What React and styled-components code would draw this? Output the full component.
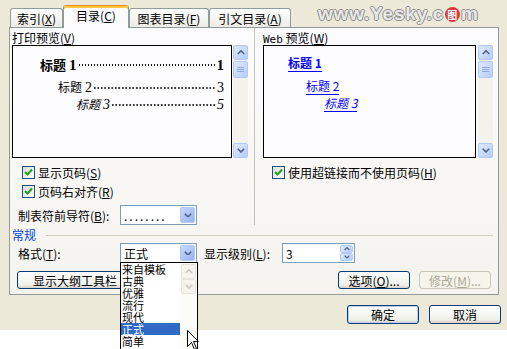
import React from "react";
import styled, { createGlobalStyle, css } from "styled-components";

const GlobalStyle = createGlobalStyle`
  html, body {
    margin: 0;
    padding: 0;
    background: #ffffff;
  }
  body {
    font-family: "Noto Sans CJK SC", "Liberation Sans", sans-serif;
    font-size: 12px;
    color: #000000;
  }
`;

const Screen = styled.div`
  position: relative;
  width: 507px;
  height: 349px;
  overflow: hidden;
  background: #ffffff;
`;

const Dialog = styled.div`
  height: 330px;
  box-sizing: border-box;
  padding-top: 5px;
  background: #ece9d8;
  display: flex;
  flex-direction: column;
`;

const TabRow = styled.div`
  display: flex;
  align-items: flex-end;
  height: 22px;
  margin-left: 10px;
  position: relative;
  z-index: 1;
`;

const Tab = styled.div`
  box-sizing: border-box;
  width: ${(p) => p.$w}px;
  height: 19px;
  border: 1px solid #919b9c;
  border-bottom: none;
  border-radius: 3px 3px 0 0;
  background: linear-gradient(#ffffff, #ecebe6);
  display: flex;
  align-items: center;
  justify-content: center;
  line-height: 12px;
  padding-top: 2px;
  white-space: nowrap;
  ${(p) =>
    p.$active &&
    css`
      height: 23px;
      margin-bottom: -1px;
      padding-top: 0;
      padding-bottom: 3px;
      background: #fcfcfe;
      border-top-color: #e68b2c;
      box-shadow: inset 0 2px 0 #ffc83c;
    `}
`;

const Panel = styled.div`
  box-sizing: border-box;
  margin-left: 9px;
  width: 490px;
  height: 268px;
  border: 1px solid #919b9c;
  background: linear-gradient(#fcfcfe, #f4f3ee);
  display: flex;
  flex-direction: column;
`;

const TopArea = styled.div`
  display: flex;
  padding-bottom: 2px;
`;

const LeftCol = styled.div`
  width: 242px;
  padding: 4px 0 0 2px;
  display: flex;
  flex-direction: column;
`;

const RightCol = styled.div`
  flex: 1;
  border-left: 1px solid #c6c4b8;
  padding: 4px 0 0 8px;
  display: flex;
  flex-direction: column;
`;

const FieldLabel = styled.div`
  height: 12px;
  line-height: 12px;
  margin-bottom: 1px;
  white-space: nowrap;
`;

const MonoWord = styled.span`
  font-family: "DejaVu Sans Mono", monospace;
  font-size: 11px;
`;

const PreviewRow = styled.div`
  display: flex;
  height: 113px;
  gap: ${(p) => p.$gap}px;
`;

const PreviewBox = styled.div`
  box-sizing: border-box;
  width: ${(p) => p.$w}px;
  border: 1px solid #000000;
  background: #fdfdff;
  display: flex;
  flex-direction: column;
  padding-top: 8px;
`;

const TocLine = styled.div`
  display: flex;
  align-items: baseline;
  margin-left: ${(p) => p.$indent}px;
  margin-right: 7px;
  margin-top: ${(p) => p.$top}px;
  height: ${(p) => p.$h}px;
  white-space: nowrap;
  font-weight: ${(p) => (p.$bold ? 700 : 400)};
  font-style: ${(p) => (p.$italic ? "italic" : "normal")};
`;

const HeadWord = styled.span`
  font-family: "Noto Sans CJK SC", sans-serif;
  font-size: ${(p) => p.$size}px;
  margin-right: 3px;
`;

const Num = styled.span`
  font-family: "Liberation Serif", serif;
  font-size: ${(p) => p.$size}px;
`;

const Leader = styled.span`
  flex: 1;
  align-self: flex-end;
  height: 2px;
  margin: 0 1px 4px 1px;
  background-image: radial-gradient(
    circle,
    #000000 ${(p) => (p.$dense ? 0.9 : 0.6)}px,
    transparent ${(p) => (p.$dense ? 1.1 : 0.9)}px
  );
  background-size: ${(p) => (p.$dense ? 3 : 3.5)}px 2px;
  background-repeat: repeat-x;
`;

const WebLink = styled.div`
  margin-left: ${(p) => p.$indent}px;
  margin-top: ${(p) => p.$top}px;
  height: ${(p) => p.$h}px;
  line-height: ${(p) => p.$h}px;
  color: #0000ff;
  white-space: nowrap;
  font-weight: ${(p) => (p.$bold ? 700 : 400)};
  font-style: ${(p) => (p.$italic ? "italic" : "normal")};
  span {
    border-bottom: 1px solid #0000ff;
  }
`;

const ScrollTrack = styled.div`
  width: 15px;
  display: flex;
  flex-direction: column;
  background: ${(p) => (p.$off ? "#f7f6f1" : "#f3f2ec")};
`;

const ScrollBtn = styled.div`
  box-sizing: border-box;
  width: 15px;
  height: 15px;
  border-radius: 2px;
  border: 1px solid ${(p) => (p.$off ? "#e6e4da" : "#b4c8f6")};
  background: ${(p) =>
    p.$off ? "#f4f3ee" : "linear-gradient(135deg, #dde8fe, #b7cdf8)"};
  display: flex;
  align-items: center;
  justify-content: center;
`;

const Thumb = styled(ScrollBtn)`
  height: 17px;
  margin-top: 1px;
`;

const Grow = styled.div`
  flex: 1;
`;

const CheckRow = styled.div`
  display: flex;
  align-items: center;
  gap: 3px;
  height: 13px;
  margin-left: ${(p) => p.$left}px;
  margin-top: ${(p) => p.$top}px;
  white-space: nowrap;
`;

const Box = styled.div`
  box-sizing: border-box;
  width: 13px;
  height: 13px;
  border: 1px solid #1c5180;
  background: linear-gradient(135deg, #dcdcd7, #ffffff);
  display: flex;
  align-items: center;
  justify-content: center;
`;

const FormRow = styled.div`
  display: flex;
  align-items: center;
  height: ${(p) => p.$h || 20}px;
  margin-top: ${(p) => p.$top}px;
  padding-left: ${(p) => p.$left}px;
  white-space: nowrap;
`;

const RowLabel = styled.div`
  width: ${(p) => p.$w}px;
  margin-left: ${(p) => p.$ml || 0}px;
  flex-shrink: 0;
`;

const Combo = styled.div`
  box-sizing: border-box;
  width: ${(p) => p.$w}px;
  height: 20px;
  border: 1px solid #7f9db9;
  background: #ffffff;
  display: flex;
  align-items: center;
  padding: 0 1px 0 3px;
`;

const ComboText = styled.div`
  flex: 1;
  letter-spacing: ${(p) => (p.$spaced ? 2 : 0)}px;
`;

const DropBtn = styled.div`
  box-sizing: border-box;
  width: 15px;
  height: 16px;
  border-radius: 2px;
  border: 1px solid #b4c8f6;
  background: linear-gradient(135deg, #c8d8fc, #96b2ef);
  display: flex;
  align-items: center;
  justify-content: center;
`;

const SpinBtns = styled.div`
  width: 13px;
  height: 16px;
  display: flex;
  flex-direction: column;
`;

const SpinHalf = styled.div`
  flex: 1;
  box-sizing: border-box;
  border: 1px solid #b4c8f6;
  border-radius: 2px;
  background: linear-gradient(135deg, #dde8fe, #b7cdf8);
  display: flex;
  align-items: center;
  justify-content: center;
`;

const GroupHead = styled.div`
  display: flex;
  align-items: center;
  height: 12px;
  margin-top: 2px;
  padding-left: 2px;
  padding-right: 5px;
  color: #0046d5;
  line-height: 12px;
`;

const GroupLine = styled.div`
  flex: 1;
  height: 1px;
  margin-left: 10px;
  background: #d0d0bf;
`;

const Button = styled.div`
  box-sizing: border-box;
  width: ${(p) => p.$w}px;
  height: ${(p) => p.$h || 18}px;
  margin-left: ${(p) => p.$ml || 0}px;
  border: 1px solid ${(p) => (p.$disabled ? "#c9c7ba" : "#003c74")};
  border-radius: 3px;
  background: ${(p) =>
    p.$disabled ? "#f5f4ea" : "linear-gradient(#ffffff, #f0f0ea 80%, #d6d0c5)"};
  color: ${(p) => (p.$disabled ? "#aca899" : "#000000")};
  display: flex;
  align-items: center;
  justify-content: ${(p) => (p.$start ? "flex-start" : "center")};
  padding-left: ${(p) => (p.$start ? 15 : 0)}px;
  white-space: nowrap;
  flex-shrink: 0;
  ${(p) =>
    p.$default &&
    css`
      box-shadow: inset 0 0 0 1px #b7cef8;
    `}
`;

const ButtonRow = styled.div`
  display: flex;
  align-items: center;
  margin-top: 8px;
  padding-left: 7px;
`;

const Footer = styled.div`
  display: flex;
  justify-content: flex-end;
  gap: 10px;
  margin-top: 10px;
  padding-right: 6px;
`;

const Watermark = styled.div`
  position: absolute;
  left: 318px;
  top: 3px;
  display: flex;
  align-items: center;
  font-family: "Liberation Sans", sans-serif;
  font-weight: 700;
  font-size: 19px;
  letter-spacing: 0.8px;
  color: #e9e9e9;
  text-shadow: 1px 0 0 #8d8d8d, -1px 0 0 #8d8d8d, 0 1px 0 #8d8d8d, 0 -1px 0 #8d8d8d;
`;

const RedDot = styled.span`
  display: inline-flex;
  align-items: center;
  justify-content: center;
  width: 15px;
  height: 15px;
  margin: 0 1px;
  border-radius: 50%;
  background: #d9383c;
  color: #ffffff;
  font-size: 10px;
  text-shadow: none;
  font-family: "Noto Sans CJK SC", sans-serif;
`;

const DropList = styled.div`
  position: absolute;
  left: 120px;
  top: 262px;
  width: 78px;
  height: 92px;
  box-sizing: border-box;
  border: 1px solid #000000;
  background: #ffffff;
  display: flex;
  z-index: 2;
`;

const Items = styled.div`
  width: 60px;
  display: flex;
  flex-direction: column;
`;

const Item = styled.div`
  height: 12px;
  display: flex;
  align-items: center;
  font-size: 11px;
  line-height: 1;
  padding-left: 1px;
  background: ${(p) => (p.$sel ? "#316ac5" : "transparent")};
  color: ${(p) => (p.$sel ? "#ffffff" : "#000000")};
`;

const ListScroll = styled.div`
  flex: 1;
  display: flex;
  flex-direction: column;
  padding: 1px 1px 0 1px;
  background: #fbfbf8;
`;

const Cursor = styled.svg`
  position: absolute;
  left: 187px;
  top: 330px;
  z-index: 3;
`;

const Chevron = ({ down, color = "#4d6185", w = 8 }) => (
  <svg width={w} height={w * 0.6} viewBox="0 0 10 6">
    <path
      d={down ? "M1 1 L5 5 L9 1" : "M1 5 L5 1 L9 5"}
      fill="none"
      stroke={color}
      strokeWidth="2"
    />
  </svg>
);

const Grip = () => (
  <svg width="7" height="7" viewBox="0 0 7 7">
    <path d="M0 1.5 H7 M0 3.5 H7 M0 5.5 H7" stroke="#8fa8e0" strokeWidth="1" />
  </svg>
);

const Tick = () => (
  <svg width="9" height="9" viewBox="0 0 9 9">
    <path d="M1 4 L3.5 6.5 L8 1.5" fill="none" stroke="#21a121" strokeWidth="2" />
  </svg>
);

const Mn = ({ k }) => (
  <span>
    (<u>{k}</u>)
  </span>
);

const Scroll = ({ off }) => (
  <ScrollTrack $off={off}>
    <ScrollBtn $off={off}>
      <Chevron color={off ? "#c9c7ba" : "#4d6185"} />
    </ScrollBtn>
    {!off && (
      <Thumb>
        <Grip />
      </Thumb>
    )}
    <Grow />
    <ScrollBtn $off={off}>
      <Chevron down color={off ? "#c9c7ba" : "#4d6185"} />
    </ScrollBtn>
  </ScrollTrack>
);

const Check = ({ children, left, top }) => (
  <CheckRow $left={left} $top={top}>
    <Box>
      <Tick />
    </Box>
    {children}
  </CheckRow>
);

const formats = ["来自模板", "古典", "优雅", "流行", "现代", "正式", "简单"];

const App = () => {
  return (
    <Screen>
      <GlobalStyle />
      <Dialog>
        <TabRow>
          <Tab $w={53}>
            索引<Mn k="X" />
          </Tab>
          <Tab $w={66} $active>
            目录<Mn k="C" />
          </Tab>
          <Tab $w={80}>
            图表目录<Mn k="F" />
          </Tab>
          <Tab $w={82}>
            引文目录<Mn k="A" />
          </Tab>
        </TabRow>

        <Panel>
          <TopArea>
            <LeftCol>
              <FieldLabel>
                打印预览<Mn k="V" />
              </FieldLabel>
              <PreviewRow $gap={1}>
                <PreviewBox $w={220}>
                  <TocLine $indent={27} $top={1} $h={15} $bold>
                    <HeadWord $size={13}>标题</HeadWord>
                    <Num $size={15}>1</Num>
                    <Leader $dense />
                    <Num $size={15}>1</Num>
                  </TocLine>
                  <TocLine $indent={45} $top={8} $h={15}>
                    <HeadWord $size={12}>标题</HeadWord>
                    <Num $size={14}>2</Num>
                    <Leader />
                    <Num $size={14}>3</Num>
                  </TocLine>
                  <TocLine $indent={63} $top={2} $h={15} $italic>
                    <HeadWord $size={12}>标题</HeadWord>
                    <Num $size={14}>3</Num>
                    <Leader />
                    <Num $size={14}>5</Num>
                  </TocLine>
                </PreviewBox>
                <Scroll />
              </PreviewRow>
              <Check left={10} top={8}>
                <span>
                  显示页码<Mn k="S" />
                </span>
              </Check>
              <Check left={10} top={6}>
                <span>
                  页码右对齐<Mn k="R" />
                </span>
              </Check>
              <FormRow $top={7} $left={6}>
                <RowLabel $w={102}>
                  制表符前导符<Mn k="B" />:
                </RowLabel>
                <Combo $w={77}>
                  <ComboText $spaced>........</ComboText>
                  <DropBtn>
                    <Chevron down />
                  </DropBtn>
                </Combo>
              </FormRow>
            </LeftCol>

            <RightCol>
              <FieldLabel>
                <MonoWord>Web</MonoWord> 预览<Mn k="W" />
              </FieldLabel>
              <PreviewRow $gap={2}>
                <PreviewBox $w={213}>
                  <WebLink $indent={24} $top={1} $h={15} $bold>
                    <span>标题 1</span>
                  </WebLink>
                  <WebLink $indent={42} $top={8} $h={15}>
                    <span>标题 2</span>
                  </WebLink>
                  <WebLink $indent={60} $top={2} $h={15} $italic>
                    <span>标题 3</span>
                  </WebLink>
                </PreviewBox>
                <Scroll />
              </PreviewRow>
              <Check left={9} top={8}>
                <span>
                  使用超链接而不使用页码<Mn k="H" />
                </span>
              </Check>
            </RightCol>
          </TopArea>

          <GroupHead>
            常规
            <GroupLine />
          </GroupHead>

          <FormRow $top={2} $left={8}>
            <RowLabel $w={102}>
              格式<Mn k="T" />:
            </RowLabel>
            <Combo $w={77}>
              <ComboText>正式</ComboText>
              <DropBtn>
                <Chevron down />
              </DropBtn>
            </Combo>
            <RowLabel $w={78} $ml={7}>
              显示级别<Mn k="L" />:
            </RowLabel>
            <Combo $w={73}>
              <ComboText>3</ComboText>
              <SpinBtns>
                <SpinHalf>
                  <Chevron w={6} />
                </SpinHalf>
                <SpinHalf>
                  <Chevron down w={6} />
                </SpinHalf>
              </SpinBtns>
            </Combo>
          </FormRow>

          <ButtonRow>
            <Button $w={125} $start>
              显示大纲工具栏
            </Button>
            <Button $w={72} $ml={196}>
              选项<Mn k="O" />...
            </Button>
            <Button $w={72} $ml={9} $disabled>
              修改<Mn k="M" />...
            </Button>
          </ButtonRow>
        </Panel>

        <Footer>
          <Button $w={72} $h={19} $default>
            确定
          </Button>
          <Button $w={72} $h={19}>
            取消
          </Button>
        </Footer>
      </Dialog>

      <Watermark>
        www.Yesky.c<RedDot>图</RedDot>m
      </Watermark>

      <DropList>
        <Items>
          {formats.map((f) => (
            <Item key={f} $sel={f === "正式"}>
              {f}
            </Item>
          ))}
        </Items>
        <ListScroll>
          <Scroll off />
        </ListScroll>
      </DropList>

      <Cursor width="13" height="21" viewBox="0 0 13 21">
        <path
          d="M0.5 0.5 L0.5 16.5 L4.5 12.5 L7.5 19.5 L9.5 18.5 L6.5 11.5 L11.5 11.5 Z"
          fill="#ffffff"
          stroke="#000000"
          strokeWidth="1"
        />
      </Cursor>
    </Screen>
  );
};

export default App;
